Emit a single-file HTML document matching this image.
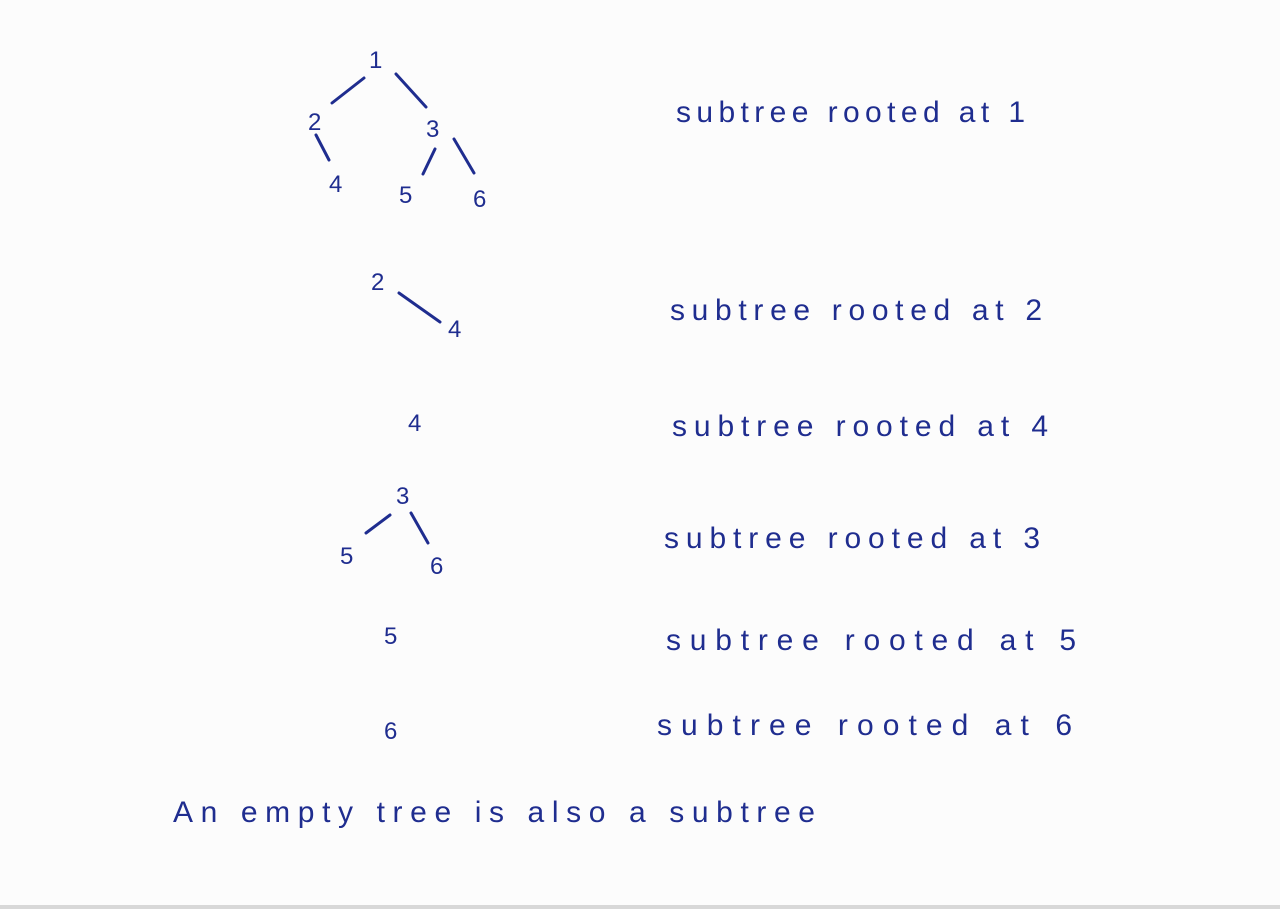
<!DOCTYPE html>
<html><head><meta charset="utf-8"><style>
html,body{margin:0;padding:0;background:#fcfcfc;width:1280px;height:909px;overflow:hidden}
svg{display:block}
text{font-family:"Liberation Sans",sans-serif;fill:#1f2d8f}
line{stroke:#1f2d8f;stroke-width:3;stroke-linecap:round}
</style></head><body>
<svg width="1280" height="909" viewBox="0 0 1280 909">
<rect x="0" y="905" width="1280" height="4" fill="#d8d8d8"/>
<g font-size="24">
<text x="369" y="68">1</text>
<text x="308" y="130">2</text>
<text x="426" y="137">3</text>
<text x="329" y="192">4</text>
<text x="399" y="203">5</text>
<text x="473" y="207">6</text>
</g>
<line x1="332" y1="103" x2="364" y2="78"/>
<line x1="396" y1="74" x2="426" y2="107"/>
<line x1="316" y1="135" x2="329" y2="160"/>
<line x1="435" y1="149" x2="423" y2="174"/>
<line x1="454" y1="139" x2="474" y2="173"/>

<g font-size="24">
<text x="371" y="290">2</text>
<text x="448" y="337">4</text>
<text x="408" y="431">4</text>
<text x="396" y="504">3</text>
<text x="340" y="564">5</text>
<text x="430" y="574">6</text>
<text x="384" y="644">5</text>
<text x="384" y="739">6</text>
</g>
<line x1="399" y1="293" x2="440" y2="322"/>
<line x1="366" y1="533" x2="390" y2="515"/>
<line x1="411" y1="513" x2="428" y2="543"/>

<g font-size="30">
<text x="676" y="122" textLength="349" lengthAdjust="spacing">subtree rooted at 1</text>
<text x="670" y="320" textLength="372" lengthAdjust="spacing">subtree rooted at 2</text>
<text x="672" y="436" textLength="376" lengthAdjust="spacing">subtree rooted at 4</text>
<text x="664" y="548" textLength="376" lengthAdjust="spacing">subtree rooted at 3</text>
<text x="666" y="650" textLength="410" lengthAdjust="spacing">subtree rooted at 5</text>
<text x="657" y="735" textLength="415" lengthAdjust="spacing">subtree rooted at 6</text>
<text x="173" y="822" textLength="642" lengthAdjust="spacing">An  empty  tree  is  also  a  subtree</text>
</g>
</svg>
</body></html>
